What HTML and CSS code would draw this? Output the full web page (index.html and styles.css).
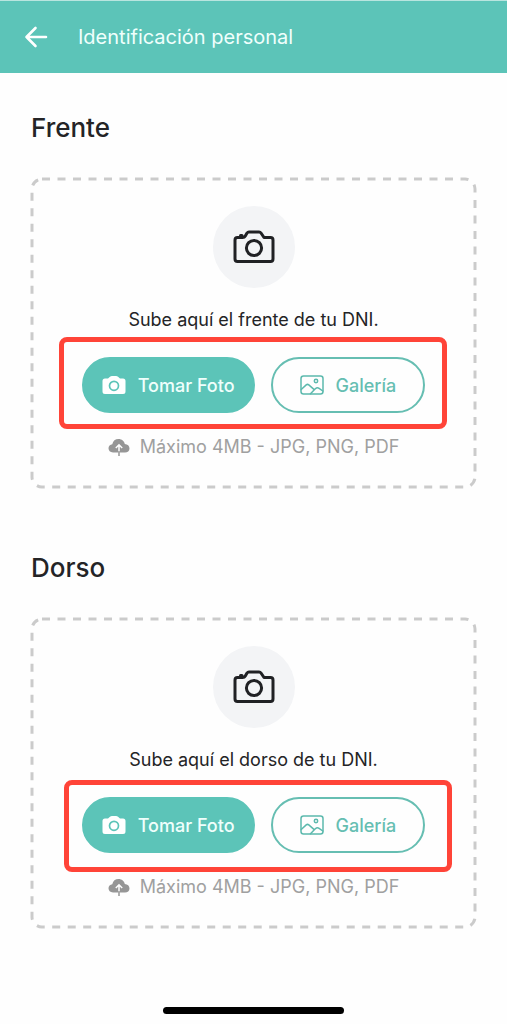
FILE: index.html
```html
<!DOCTYPE html>
<html lang="es">
<head>
<meta charset="utf-8">
<meta name="viewport" content="width=device-width, initial-scale=1">
<title>Identificación personal</title>
<link rel="stylesheet" href="styles.css">
</head>
<body>
<svg class="sprite" aria-hidden="true">
  <symbol id="camera-outline" viewBox="0 0 42 34">
    <g fill="none" stroke="#202124" stroke-width="3" stroke-linejoin="round" stroke-linecap="round">
      <path d="M4.500 7.500H9.500Q11.500 7.500 12.300 6L14 3Q14.700 2 16 2H26Q27.300 2 28 3L31 7.500H37.500Q40 7.500 40 10V29Q40 31.500 37.500 31.500H4.500Q2 31.500 2 29V10Q2 7.500 4.500 7.500Z"/>
      <path d="M7.500 5.500H9"/>
      <circle cx="21" cy="18" r="7.600"/>
    </g>
  </symbol>
  <symbol id="camera-solid" viewBox="0 0 24 20">
    <path fill="#fff" d="M3 3.500H6L8 1.700Q8.800 1 10 1H14Q15.200 1 16 1.700L18 3.500H21Q23.500 3.500 23.500 6V16.500Q23.500 19 21 19H3Q.5 19 .5 16.500V6Q.5 3.500 3 3.500Z"/>
    <circle cx="12" cy="10.800" r="4.500" fill="none" stroke="#5cc4b8" stroke-width="1.700"/>
  </symbol>
  <symbol id="picture" viewBox="0 0 24 20">
    <g fill="none" stroke="#5cb9ad" stroke-width="1.500" stroke-linejoin="round" stroke-linecap="round">
      <rect x="1" y="1" width="22" height="18" rx="2.500"/>
      <circle cx="16" cy="6" r="1.700"/>
      <path d="M1.200 14.500L6.200 9.900Q7.500 8.800 8.800 9.900L14.200 14.600M10.500 18.800L15.300 13.800Q17.200 12 19.100 13.300L22.800 16"/>
    </g>
  </symbol>
  <symbol id="cloud-upload" viewBox="0 0 22 18">
    <path fill="#969696" d="M5 14.500C2 14.500.5 12.500.5 10.300C.5 8 2.100 6.500 4.300 6.200C5 2.900 7.300 1 10.500 1C13.900 1 16.300 3.200 16.800 6.100C19.600 6.300 21.500 8 21.500 10.500C21.500 13 19.600 14.500 17 14.500Z"/>
    <path fill="none" stroke="#fff" stroke-width="1.500" d="M11 14.500V7.200M7.800 10L11 6.800L14.200 10"/>
    <path stroke="#969696" stroke-width="1.500" d="M11 13V18"/>
  </symbol>
</svg>

<header class="topbar">
  <button class="back" type="button" aria-label="Volver">
    <svg class="back-icon" viewBox="0 0 24 22" fill="none" stroke="#fff" stroke-width="2.600" stroke-linecap="round" stroke-linejoin="round" aria-hidden="true"><path d="M11.500 2L2.500 11L11.500 20M2.500 11H22"/></svg>
  </button>
  <h1 class="title">Identificación personal</h1>
</header>

<main class="content">
  <section class="side">
    <h2 class="side-title">Frente</h2>
    <div class="card">
      <svg class="card-outline" aria-hidden="true"><rect class="card-dash" x="1" y="1" rx="10"/></svg>
      <div class="badge"><svg class="badge-icon" aria-hidden="true"><use href="#camera-outline"/></svg></div>
      <p class="prompt">Sube aquí el frente de tu DNI.</p>
      <div class="actions">
        <button class="btn btn-photo" type="button"><svg class="btn-icon" aria-hidden="true"><use href="#camera-solid"/></svg>Tomar Foto</button>
        <button class="btn btn-gallery" type="button"><svg class="btn-icon" aria-hidden="true"><use href="#picture"/></svg>Galería</button>
        <span class="marker marker-front"></span>
      </div>
      <p class="limits"><svg class="cloud" aria-hidden="true"><use href="#cloud-upload"/></svg>Máximo 4MB - JPG, PNG, PDF</p>
    </div>
  </section>

  <section class="side">
    <h2 class="side-title">Dorso</h2>
    <div class="card">
      <svg class="card-outline" aria-hidden="true"><rect class="card-dash" x="1" y="1" rx="10"/></svg>
      <div class="badge"><svg class="badge-icon" aria-hidden="true"><use href="#camera-outline"/></svg></div>
      <p class="prompt">Sube aquí el dorso de tu DNI.</p>
      <div class="actions">
        <button class="btn btn-photo" type="button"><svg class="btn-icon" aria-hidden="true"><use href="#camera-solid"/></svg>Tomar Foto</button>
        <button class="btn btn-gallery" type="button"><svg class="btn-icon" aria-hidden="true"><use href="#picture"/></svg>Galería</button>
        <span class="marker marker-back"></span>
      </div>
      <p class="limits"><svg class="cloud" aria-hidden="true"><use href="#cloud-upload"/></svg>Máximo 4MB - JPG, PNG, PDF</p>
    </div>
  </section>
</main>

<footer class="home"><div class="home-bar"></div></footer>
</body>
</html>
```
FILE: styles.css
```css
* { box-sizing: border-box; }

body {
  margin: 0;
  min-height: 100vh;
  display: flex;
  flex-direction: column;
  background: #fefefe;
  color: #242426;
  font-family: Inter, "Liberation Sans", sans-serif;
}

h1, h2, p { margin: 0; }

button {
  font: inherit;
  cursor: pointer;
}

.sprite {
  position: absolute;
  width: 0;
  height: 0;
}

.topbar {
  display: flex;
  align-items: center;
  gap: 30px;
  padding: 20px 24px;
  border-top: 1px solid #b9e5df;
  background: #5cc4b8;
  color: #effffc;
}

.back {
  display: flex;
  padding: 0;
  border: 0;
  background: none;
}

.back-icon {
  width: 24px;
  height: 22px;
}

.title {
  font-size: 20px;
  font-weight: 400;
  line-height: 32px;
}

.content {
  display: flex;
  flex-direction: column;
  gap: 60px;
  padding: 35px 31px 0;
}

.side {
  display: flex;
  flex-direction: column;
  gap: 30px;
}

.side-title {
  font-size: 26px;
  font-weight: 500;
  line-height: 40px;
}

.card {
  position: relative;
  display: flex;
  flex-direction: column;
  align-items: center;
  padding: 28px 16px 29px;
}

.card-outline {
  position: absolute;
  inset: 0;
  width: 100%;
  height: 100%;
  overflow: visible;
}

.card-dash {
  width: calc(100% - 2px);
  height: calc(100% - 2px);
  fill: none;
  stroke: #cbcbcb;
  stroke-width: 3px;
  stroke-dasharray: 8 7.500;
}

.badge {
  display: flex;
  align-items: center;
  justify-content: center;
  width: 82px;
  height: 82px;
  border-radius: 50%;
  background: #f3f4f6;
}

.badge-icon {
  width: 42px;
  height: 34px;
}

.prompt {
  margin-top: 20px;
  font-size: 18px;
  line-height: 24px;
}

.actions {
  position: relative;
  display: flex;
  gap: 16px;
  margin-top: 25px;
}

.btn {
  display: flex;
  align-items: center;
  gap: 12px;
  height: 56px;
  border: 2px solid #5cc4b8;
  border-radius: 28px;
  font-size: 18px;
  font-weight: 500;
  white-space: nowrap;
}

.btn-photo {
  padding: 0 18px;
  background: #5cc4b8;
  color: #effffc;
}

.btn-gallery {
  padding: 0 27px;
  border-color: #66beb2;
  background: #fefefe;
  color: #66beb2;
}

.btn-icon {
  width: 24px;
  height: 20px;
}

/* Highlight frame laid over the upload buttons */
.marker {
  position: absolute;
  width: 388px;
  height: 92px;
  border: 5px solid #ff4438;
  border-radius: 8px;
  pointer-events: none;
}

.marker-front {
  top: -20px;
  left: -23px;
}

.marker-back {
  top: -17px;
  left: -18px;
}

.limits {
  display: flex;
  align-items: center;
  gap: 10px;
  margin-top: 22px;
  color: #a0a0a0;
  font-size: 18px;
  line-height: 24px;
}

.cloud {
  width: 22px;
  height: 18px;
}

.home {
  display: flex;
  justify-content: center;
  margin-top: auto;
  padding: 10px;
}

.home-bar {
  width: 181px;
  height: 7px;
  border-radius: 4px;
  background: #000;
}
```
